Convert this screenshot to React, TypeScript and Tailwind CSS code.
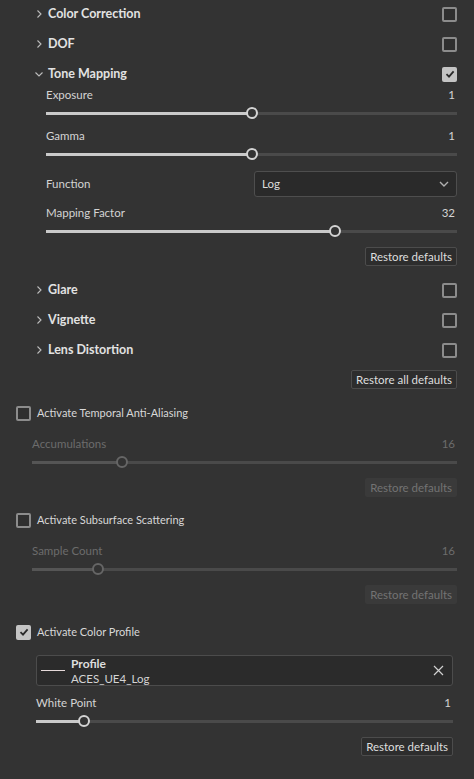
import React from 'react';

const font = { fontFamily: 'Lato, "Open Sans", sans-serif' };

const Chevron: React.FC<{ open?: boolean }> = ({ open }) => (
  <svg width="10" height="10" viewBox="0 0 10 10" className="shrink-0">
    {open ? (
      <path d="M1.5 3.5 L5 7 L8.5 3.5" fill="none" stroke="#bdbdbd" strokeWidth="1.1" />
    ) : (
      <path d="M3.5 1.5 L7 5 L3.5 8.5" fill="none" stroke="#bdbdbd" strokeWidth="1.1" />
    )}
  </svg>
);

const Checkbox: React.FC<{ checked?: boolean }> = ({ checked }) =>
  checked ? (
    <div className="w-[15px] h-[15px] rounded-[2px] bg-[#c4c4c4] flex items-center justify-center shrink-0">
      <svg width="10" height="10" viewBox="0 0 10 10">
        <path d="M1.5 5.2 L4 7.6 L8.6 2.4" fill="none" stroke="#2a2a2a" strokeWidth="1.8" />
      </svg>
    </div>
  ) : (
    <div className="w-[15px] h-[15px] rounded-[2px] border-2 border-[#8c8c8c] bg-[#2f2f2f] shrink-0" />
  );

const SectionHeader: React.FC<{ title: string; open?: boolean; checked?: boolean }> = ({
  title,
  open,
  checked,
}) => (
  <div className="h-[30px] flex items-center">
    <Chevron open={open} />
    <span className="ml-[4px] text-[12.5px] font-bold text-[#e2e2e2]">{title}</span>
    <div className="flex-1" />
    <Checkbox checked={checked} />
  </div>
);

const Slider: React.FC<{ label: string; value: string; pct: number; disabled?: boolean }> = ({
  label,
  value,
  pct,
  disabled,
}) => {
  const txt = disabled ? 'text-[#6c6c6c]' : 'text-[#d4d4d4]';
  return (
    <div className="h-[41px] flex flex-col">
      <div className={`h-[14px] flex items-center justify-between text-[11.5px] ${txt}`}>
        <span>{label}</span>
        <span className="pr-[2px]">{value}</span>
      </div>
      <div className="relative h-[12px] mt-[5px]">
        <div className="absolute left-0 right-0 top-[5px] h-[3px] bg-[#4a4a4a]" />
        <div
          className={`absolute left-0 top-[5px] h-[3px] ${disabled ? 'bg-[#555555]' : 'bg-[#cacaca]'}`}
          style={{ width: `calc(${pct}% - ${pct * 0.12}px + 6px)` }}
        />
        <div
          className={`absolute top-0 w-[12px] h-[12px] rounded-full border-2 bg-[#333333] ${
            disabled ? 'border-[#666666]' : 'border-[#d4d4d4]'
          }`}
          style={{ left: `calc(${pct}% - ${pct * 0.12}px)` }}
        />
      </div>
    </div>
  );
};

const RestoreButton: React.FC<{ label?: string; disabled?: boolean }> = ({
  label = 'Restore defaults',
  disabled,
}) => (
  <div className="flex justify-end">
    {disabled ? (
      <div className="h-[19px] px-[5px] flex items-center rounded-[2px] bg-[#3a3a3a] text-[11.5px] text-[#737373]">
        {label}
      </div>
    ) : (
      <div className="h-[19px] px-[4px] flex items-center rounded-[2px] border border-[#4c4c4c] bg-[#2d2d2d] text-[11.5px] text-[#dedede]">
        {label}
      </div>
    )}
  </div>
);

const ToggleRow: React.FC<{ label: string; checked?: boolean }> = ({ label, checked }) => (
  <div className="h-[20px] flex items-center">
    <Checkbox checked={checked} />
    <span className="ml-[6px] text-[11px] text-[#d8d8d8]">{label}</span>
  </div>
);

export default function App() {
  return (
    <div className="w-[474px] h-[779px] bg-[#333333] overflow-hidden" style={font}>
      <div className="mt-[-1px] pl-[34px] pr-[17px]">
        <SectionHeader title="Color Correction" />
        <SectionHeader title="DOF" />
        <SectionHeader title="Tone Mapping" open checked />
        <div className="pl-[12px] mt-[-1px]">
          <Slider label="Exposure" value="1" pct={50.2} />
          <Slider label="Gamma" value="1" pct={50} />
          <div className="mt-px h-[26px] flex items-center">
            <span className="w-[208px] text-[11.5px] text-[#d4d4d4]">Function</span>
            <div className="flex-1 h-[26px] flex items-center justify-between pl-[7px] pr-[6px] rounded-[3px] border border-[#4e4e4e] bg-[#2a2a2a] text-[11.5px] text-[#dcdcdc]">
              <span>Log</span>
              <svg width="12" height="10" viewBox="0 0 12 10">
                <path d="M2 3 L6 7 L10 3" fill="none" stroke="#b0b0b0" strokeWidth="1.4" />
              </svg>
            </div>
          </div>
          <div className="mt-[9px]">
            <Slider label="Mapping Factor" value="32" pct={70.9} />
          </div>
          <RestoreButton />
        </div>
        <div className="mt-[9px]">
          <SectionHeader title="Glare" />
          <SectionHeader title="Vignette" />
          <SectionHeader title="Lens Distortion" />
        </div>
        <div className="mt-[5px]">
          <RestoreButton label="Restore all defaults" />
        </div>
      </div>

      <div className="pl-[16px] pr-[17px]">
        <div className="mt-[14px]">
          <ToggleRow label="Activate Temporal Anti-Aliasing" />
        </div>
        <div className="pl-[16px] mt-[14px]">
          <Slider label="Accumulations" value="16" pct={20.4} disabled />
          <RestoreButton disabled />
        </div>

        <div className="mt-[13px]">
          <ToggleRow label="Activate Subsurface Scattering" />
        </div>
        <div className="pl-[16px] mt-[14px]">
          <Slider label="Sample Count" value="16" pct={14.6} disabled />
          <RestoreButton disabled />
        </div>

        <div className="mt-[18px]">
          <ToggleRow label="Activate Color Profile" checked />
        </div>
        <div className="pl-[20px] pr-[4px] mt-[13px]">
          <div className="h-[31px] flex items-center rounded-[3px] border border-[#4c4c4c] bg-[#2b2b2b] pl-[4px] pr-[8px]">
            <div className="w-[24px] h-px bg-[#e6dada]" />
            <div className="ml-[6px] flex flex-col leading-[15px]">
              <span className="text-[12px] font-bold text-[#dedede]">Profile</span>
              <span className="text-[11.5px] text-[#d4d4d4]">ACES_UE4_Log</span>
            </div>
            <div className="flex-1" />
            <svg width="11" height="11" viewBox="0 0 11 11">
              <path d="M1 1 L10 10 M10 1 L1 10" fill="none" stroke="#d0d0d0" strokeWidth="1.2" />
            </svg>
          </div>
          <div className="mt-[10px]">
            <Slider label="White Point" value="1" pct={10.4} />
          </div>
          <RestoreButton />
        </div>
      </div>
    </div>
  );
}
